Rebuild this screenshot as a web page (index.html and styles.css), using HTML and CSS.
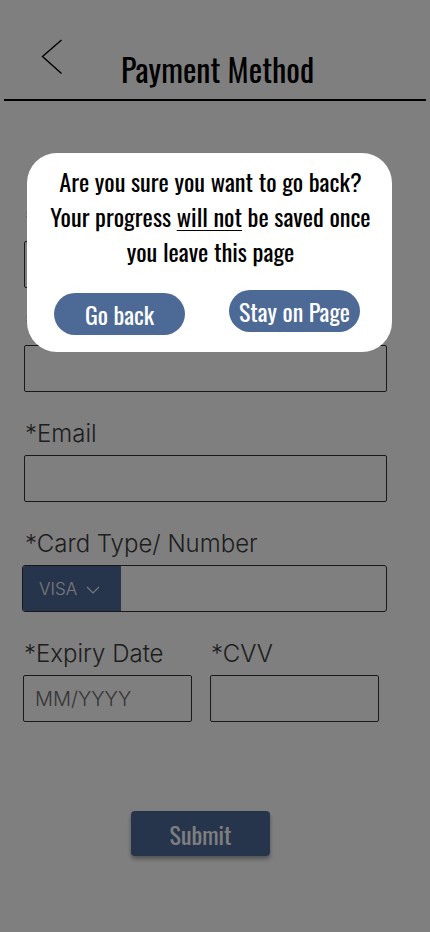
FILE: index.html
```html
<!DOCTYPE html>
<html lang="en">
<head>
<meta charset="utf-8">
<title>Payment Method</title>
<link rel="stylesheet" href="styles.css">
</head>
<body>
<div class="page">
  <header class="header">
    <button class="back" aria-label="Back">
      <svg width="22" height="36" viewBox="0 0 22 36"><polyline points="20.5,1 1.5,17.5 20.5,34.5" fill="none" stroke="#000" stroke-width="1.4"/></svg>
    </button>
    <h1 class="title">Payment Method</h1>
  </header>

  <main class="form">
    <div class="field first">
      <label class="label">*Name on Card</label>
      <div class="input"></div>
    </div>
    <div class="field second">
      <label class="label">*Billing Address</label>
      <div class="input"></div>
    </div>
    <div class="field">
      <label class="label">*Email</label>
      <div class="input"></div>
    </div>
    <div class="field">
      <label class="label">*Card Type/ Number</label>
      <div class="input card">
        <div class="visa">VISA
          <svg width="14" height="8" viewBox="0 0 14 8"><polyline points="1,1 7,7 13,1" fill="none" stroke="currentColor" stroke-width="1.1"/></svg>
        </div>
      </div>
    </div>
    <div class="row">
      <div class="field small">
        <label class="label">*Expiry Date</label>
        <div class="input"><span class="ph">MM/YYYY</span></div>
      </div>
      <div class="field small">
        <label class="label">*CVV</label>
        <div class="input"></div>
      </div>
    </div>
    <div class="actions">
      <button class="submit">Submit</button>
    </div>
  </main>

  <div class="overlay"></div>

  <div class="modal" role="dialog">
    <p class="msg">Are you sure you want to go back?<br>Your progress <u>will not</u> be saved once<br>you leave this page</p>
    <div class="modal-btns">
      <button class="pill go">Go back</button>
      <button class="pill stay">Stay on Page</button>
    </div>
  </div>
</div>
</body>
</html>
```

FILE: styles.css
```css
* { box-sizing: border-box; }
html, body { margin: 0; padding: 0; }
body {
  width: 430px;
  height: 932px;
  overflow: hidden;
  background: #fff;
  font-family: "Inter", "Roboto", sans-serif;
}
.page {
  position: relative;
  width: 430px;
  height: 932px;
}
.header {
  display: flex;
  align-items: flex-start;
  margin: 0 4px;
  height: 101px;
  border-bottom: 2px solid #000;
  padding-left: 37px;
}
.back {
  border: 0;
  background: none;
  padding: 0;
  margin-top: 39px;
  width: 22px;
  height: 36px;
  display: block;
}
.back svg { display: block; }
.title {
  margin: 47px 0 0 58px;
  font-family: "Oswald", "Liberation Sans Narrow", "DejaVu Sans Condensed", sans-serif;
  font-stretch: condensed;
  font-weight: 400;
  font-size: 32px;
  line-height: 44px;
  color: #000;
}
.form {
  padding: 0 43px 0 24px;
  display: flex;
  flex-direction: column;
}
.field { display: flex; flex-direction: column; margin-top: 28px; }
.field.first { margin-top: 105px; }
.field.second { margin-top: 22px; }
.label {
  font-size: 24px;
  font-weight: 300;
  line-height: 28px;
  color: #3c3c3c;
  margin-bottom: 7px;
  padding-left: 1px;
}
.input {
  height: 47px;
  border: 1px solid #333;
  border-radius: 2px;
  background: #fff;
  display: flex;
  align-items: center;
}
.input.card {
  margin-left: -2px;
  overflow: hidden;
  border-radius: 3px;
}
.visa {
  height: 100%;
  width: 98px;
  background: #4c6899;
  color: #f0f2f6;
  font-size: 17px;
  font-weight: 300;
  display: flex;
  align-items: center;
  padding-left: 16px;
  gap: 9px;
}
.visa svg { margin-top: 3px; }
.row {
  display: flex;
  gap: 18px;
  margin-left: -1px;
}
.field.small { width: 169px; }
.ph {
  padding-left: 11px;
  font-size: 20px;
  font-weight: 300;
  color: #6a6a6a;
}
.actions {
  display: flex;
  justify-content: center;
  margin-top: 89px;
  padding-right: 10px;
}
.submit {
  width: 139px;
  height: 45px;
  border: 0;
  border-radius: 4px;
  background: #4c6899;
  color: #fff;
  font-family: "Oswald", "Liberation Sans Narrow", "DejaVu Sans Condensed", sans-serif;
  font-stretch: condensed;
  font-size: 24px;
  box-shadow: 0 3px 4px rgba(0,0,0,0.35);
}
.overlay {
  position: absolute;
  inset: 0;
  background: rgba(0,0,0,0.5);
}
.modal {
  position: absolute;
  left: 27px;
  top: 153px;
  width: 365px;
  height: 199px;
  background: #fff;
  border-radius: 30px;
  padding-top: 11px;
  font-family: "Oswald", "Liberation Sans Narrow", "DejaVu Sans Condensed", sans-serif;
  font-stretch: condensed;
  color: #000;
}
.msg {
  margin: 0;
  text-align: center;
  font-size: 24.4px;
  line-height: 35px;
  padding-left: 2px;
}
.msg u { text-underline-offset: 3px; text-decoration-thickness: 1px; }
.modal-btns {
  display: flex;
  justify-content: space-between;
  align-items: flex-start;
  padding: 0 32px 0 27px;
  margin-top: 21px;
}
.pill {
  width: 131px;
  height: 42px;
  border: 0;
  border-radius: 21px;
  background: #4d6a96;
  color: #fff;
  font-family: inherit;
  font-stretch: condensed;
  font-size: 24px;
  padding: 0;
}
.pill.go { margin-top: 3px; }
```
